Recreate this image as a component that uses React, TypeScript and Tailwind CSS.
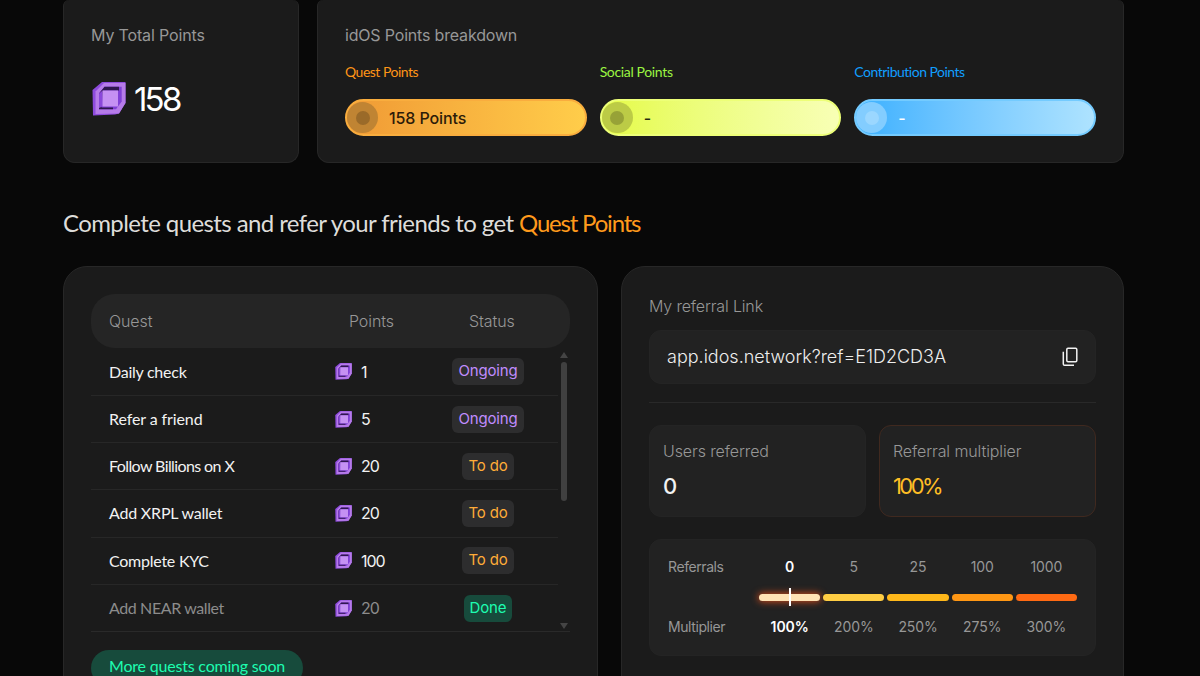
interface Quest {
  name: string;
  points: number;
  status: "Ongoing" | "To do" | "Done";
  tracking: string;
}

const quests: Quest[] = [
  { name: "Daily check", points: 1, status: "Ongoing", tracking: "tracking-[-0.25px]" },
  { name: "Refer a friend", points: 5, status: "Ongoing", tracking: "tracking-[-0.1px]" },
  { name: "Follow Billions on X", points: 20, status: "To do", tracking: "tracking-[-0.6px]" },
  { name: "Add XRPL wallet", points: 20, status: "To do", tracking: "tracking-[-0.2px]" },
  { name: "Complete KYC", points: 100, status: "To do", tracking: "tracking-[-0.25px]" },
  { name: "Add NEAR wallet", points: 20, status: "Done", tracking: "tracking-[-0.4px]" },
];

const statusStyles = {
  Ongoing: "bg-[#2d2d2e] text-[#c08cff]",
  "To do": "bg-[#2d2d2e] text-[#ffac38]",
  Done: "bg-[#174b3c] text-[#1dfdb0]",
};

const breakdown = [
  {
    label: "Quest Points",
    value: "158 Points",
    labelStyle: "text-[#ff9517] tracking-[-0.5px]",
    barStyle: "border-[#f9ad3e] from-[#f09a35] to-[#ffcd4a] text-[#2c1b09]",
    dotStyle: "bg-[#c08433]",
    innerStyle: "bg-[#9a6a29]",
  },
  {
    label: "Social Points",
    value: "-",
    labelStyle: "text-[#9bf542] tracking-[-0.35px]",
    barStyle: "border-[#edff78] from-[#e5fb42] to-[#f8ffb5] text-[#24280f]",
    dotStyle: "bg-[#bccb46]",
    innerStyle: "bg-[#97a237]",
  },
  {
    label: "Contribution Points",
    value: "-",
    labelStyle: "text-[#119fff] tracking-[-0.5px]",
    barStyle: "border-[#74cbff] from-[#38b0ff] to-[#aee3ff] text-white",
    dotStyle: "bg-[#83cdff]",
    innerStyle: "bg-[#9bd7ff]",
  },
];

const tiers = [
  { referrals: "0", multiplier: "100%", bar: "bg-[#ffe3b5] shadow-[0_0_7px_1px_#c64a1d]" },
  { referrals: "5", multiplier: "200%", bar: "bg-[#ffcd43]" },
  { referrals: "25", multiplier: "250%", bar: "bg-[#ffb81a]" },
  { referrals: "100", multiplier: "275%", bar: "bg-[#ff9714]" },
  { referrals: "1000", multiplier: "300%", bar: "bg-[#ff6a13]" },
];

function Coin({ className }: { className: string }) {
  return (
    <svg viewBox="0 0 34 34" className={className}>
      <path d="M.5 8 10 0H33.5V21L27 31.5 23 32.6 1 33.6Z" fill="#8e4bdd" />
      <path d="M3.5 9.5 12 1H33.5V21L27 31.5 3.5 32Z" fill="#b67be9" />
      <path d="M12.5 4.8H29.7V19.5L24 27.3H7V11.5Z" fill="#8040d6" />
      <path d="M12.5 4.8H27V8.5H11L9.5 25.5H21V27.3H7V11.5Z" fill="#2f1650" />
      <path d="M7 11.5 10.5 8.5V24.5L7 26Z" fill="#8a48da" />
      <path d="M10.5 8.5H26V24.5H10.5Z" fill="#c591f3" />
    </svg>
  );
}

function CopyIcon() {
  return (
    <svg viewBox="0 0 16 20" className="w-4 h-5" fill="none" stroke="#f2f2f2" strokeWidth="1.5">
      <rect x="4.8" y="1.3" width="10" height="13.4" rx="1.2" />
      <path d="M1.3 4.8V17a1.3 1.3 0 0 0 1.3 1.3H12" />
    </svg>
  );
}

export default function App() {
  return (
    <div className="h-[676px] overflow-hidden bg-[#080808] pl-[63px] pr-[76px] font-['Inter',sans-serif] text-[#979797]">
      {/* Points summary */}
      <div className="flex gap-[18px] h-[163px]">
        <section className="w-[236px] shrink-0 bg-[#1b1b1b] border border-t-0 border-[#272727] rounded-xl rounded-t-md pl-[27px]">
          <h2 className="mt-[23px] leading-6 tracking-[-0.15px]">My Total Points</h2>
          <div className="flex items-center gap-2 mt-[28px] h-12">
            <Coin className="w-[34px] h-[34px] ml-px" />
            <span className="mt-0.5 text-[33px] text-white tracking-[-2.8px]">158</span>
          </div>
        </section>

        <section className="flex-1 bg-[#1b1b1b] border border-t-0 border-[#272727] rounded-xl rounded-t-md px-[27px]">
          <h2 className="mt-[23px] leading-6 tracking-[-0.18px]">idOS Points breakdown</h2>
          <div className="grid grid-cols-3 gap-[13px] mt-[15px]">
            {breakdown.map((b) => (
              <div key={b.label}>
                <p className={`font-['Lato',sans-serif] text-sm leading-5 ${b.labelStyle}`}>{b.label}</p>
                <div className={`mt-[17px] h-[37px] rounded-full border-2 bg-linear-to-r flex items-center ${b.barStyle}`}>
                  <div className={`size-[31px] rounded-full flex items-center justify-center ${b.dotStyle}`}>
                    <div className={`size-3.5 rounded-full ${b.innerStyle}`} />
                  </div>
                  <span className="ml-[11px] font-medium tracking-[-0.1px]">{b.value}</span>
                </div>
              </div>
            ))}
          </div>
        </section>
      </div>

      <h1 className="font-['Lato',sans-serif] text-2xl leading-8 mt-11 text-[#deddda] tracking-[-0.6px] whitespace-nowrap">
        Complete quests and refer your friends to get{" "}
        <span className="text-[#ff9a1c] tracking-[-1.2px]">Quest Points</span>
      </h1>

      <div className="flex gap-[23px] mt-[27px]">
        {/* Quests */}
        <section className="w-[535px] h-[440px] shrink-0 bg-[#1b1b1b] border border-[#272727] rounded-3xl px-[27px] pt-[27px]">
          <div className="h-[54px] rounded-3xl bg-[#252525] flex items-center font-light pl-[18px] tracking-[-0.1px]">
            <span className="w-[240px]">Quest</span>
            <span className="w-[120px]">Points</span>
            <span>Status</span>
          </div>
          <div className="flex border-b border-[#2a2a2a] h-[284px]">
            <div className="flex-1">
              {quests.map((q) => (
                <div
                  key={q.name}
                  className="h-[47.2px] first:h-12 flex items-center border-b border-[#272727] last:border-b-0 last:h-[47px] pl-[18px]"
                >
                  <span
                    className={`w-[226px] font-['Lato',sans-serif] ${q.tracking} ${q.status === "Done" ? "text-[#8c8c8c]" : "text-[#f2f2f2]"}`}
                  >
                    {q.name}
                  </span>
                  <Coin className="size-[17px]" />
                  <span
                    className={`ml-[9px] w-[85px] tracking-[-1px] ${q.status === "Done" ? "text-[#8c8c8c]" : "text-[#f2f2f2]"}`}
                  >
                    {q.points}
                  </span>
                  <div className="w-[84px] flex justify-center">
                    <span
                      className={`h-[27px] rounded-md px-1.5 text-[15px] leading-[26px] tracking-[-0.15px] ${statusStyles[q.status]}`}
                    >
                      {q.status}
                    </span>
                  </div>
                </div>
              ))}
            </div>
            <div className="w-3 flex flex-col items-center pt-1 pb-0.5">
              <svg viewBox="0 0 8 6" className="w-2 h-1.5">
                <path d="M4 0 8 6H0Z" fill="#444" />
              </svg>
              <div className="mt-1 w-1.5 h-[139px] rounded-full bg-[#404040]" />
              <svg viewBox="0 0 8 6" className="w-2 h-1.5 mt-auto">
                <path d="M0 0H8L4 6Z" fill="#444" />
              </svg>
            </div>
          </div>
          <span className="mt-[18px] inline-block h-9 rounded-full bg-[#174b3c] px-[18px] leading-8 font-['Lato',sans-serif] text-[#1dfdb0] tracking-[-0.2px]">
            More quests coming soon
          </span>
        </section>

        {/* Referrals */}
        <section className="flex-1 h-[440px] bg-[#1b1b1b] border border-[#272727] rounded-3xl px-[27px] pt-[27px]">
          <h2 className="font-light leading-6 tracking-[-0.15px]">My referral Link</h2>
          <div className="mt-3 h-[54px] rounded-xl bg-[#222] border border-[#242424] flex items-center justify-between px-[17px]">
            <span className="text-lg font-light text-[#eee]">app.idos.network?ref=E1D2CD3A</span>
            <CopyIcon />
          </div>
          <div className="mt-[18px] border-t border-[#292929]" />

          <div className="mt-[22px] grid grid-cols-2 gap-[13px]">
            <div className="h-[92px] rounded-xl bg-[#222] border border-[#242424] px-[13px] pt-[13px]">
              <p className="font-light leading-6 tracking-[-0.1px]">Users referred</p>
              <p className="mt-[7px] text-[22px] leading-8 font-medium text-[#f2f2f2]">0</p>
            </div>
            <div className="h-[92px] rounded-xl bg-[#222] border border-[#40291f] px-[13px] pt-[13px]">
              <p className="font-light leading-6 tracking-[-0.1px]">Referral multiplier</p>
              <p className="mt-[7px] text-[22px] leading-8 text-[#ffbe25] tracking-[-2.6px]">100%</p>
            </div>
          </div>

          <div className="mt-[22px] h-[117px] rounded-xl bg-[#222] border border-[#242424] pl-[18px] pr-[18px] pt-[15px] text-sm flex">
            <div className="w-[91px] tracking-[-0.42px]">
              <p className="leading-6">Referrals</p>
              <p className="mt-9 leading-6">Multiplier</p>
            </div>
            <div className="flex-1 grid grid-cols-5 gap-[3px] text-center tracking-[-0.1px]">
              {tiers.map((t, i) => (
                <div key={t.referrals} className={i === 0 ? "text-white font-semibold" : ""}>
                  <p className="leading-6">{t.referrals}</p>
                  <div className="h-9 flex items-center">
                    <div className={`h-[7px] w-full rounded-full flex items-center justify-center ${t.bar}`}>
                      {i === 0 && <div className="w-0.5 h-[18px] shrink-0 bg-white" />}
                    </div>
                  </div>
                  <p className="leading-6">{t.multiplier}</p>
                </div>
              ))}
            </div>
          </div>
        </section>
      </div>
    </div>
  );
}
